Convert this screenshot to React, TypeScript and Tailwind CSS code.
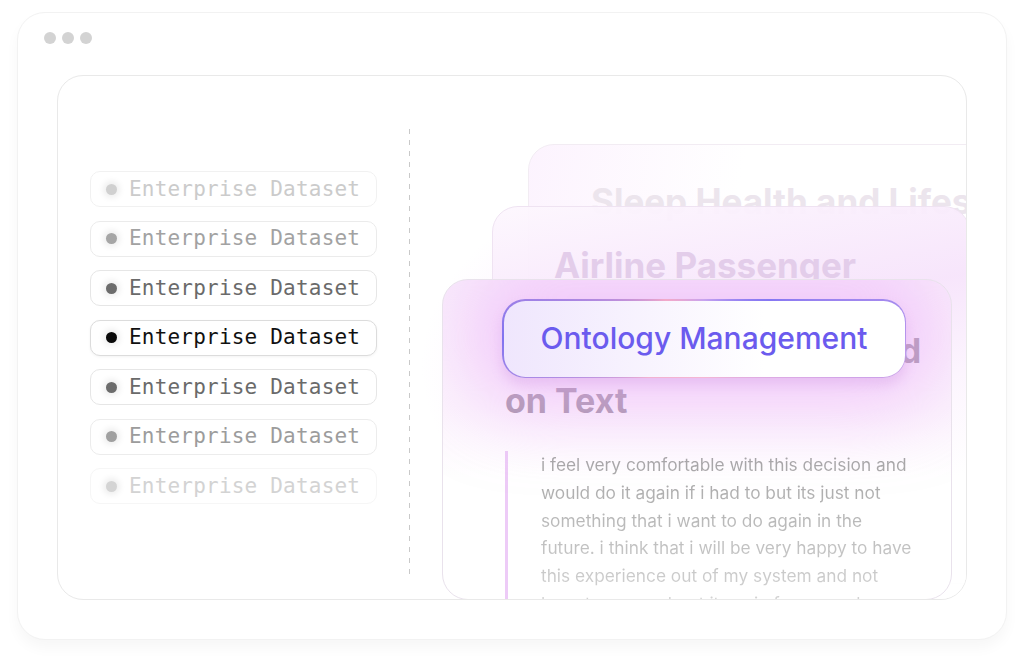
import React from "react";

const datasets = [
  { pill: "border-[#f1f1f1]", dot: "bg-[#d0d0d0]", text: "text-[#cbcbcb]" },
  { pill: "border-[#ebebeb]", dot: "bg-[#a6a6a6]", text: "text-[#a2a2a2]" },
  { pill: "border-[#e6e6e6]", dot: "bg-[#6c6c6c]", text: "text-[#6a6a6a]" },
  { pill: "border-[#dcdcdc] shadow-[0_1px_3px_rgba(0,0,0,0.05)]", dot: "bg-[#0a0a0a]", text: "text-[#111111]" },
  { pill: "border-[#e6e6e6]", dot: "bg-[#6c6c6c]", text: "text-[#6a6a6a]" },
  { pill: "border-[#ececec]", dot: "bg-[#a0a0a0]", text: "text-[#9c9c9c]" },
  { pill: "border-[#f6f6f6]", dot: "bg-[#d4d4d4]", text: "text-[#d3d3d3]" },
];

const excerpt = [
  "i feel very comfortable with this decision and",
  "would do it again if i had to but its just not",
  "something that i want to do again in the",
  "future. i think that i will be very happy to have",
  "this experience out of my system and not",
  "have to worry about it again for a very long",
  "time",
];

const sans = "font-['Inter','Noto_Sans',sans-serif]";

function DatasetPill({ pill, dot, text }: { pill: string; dot: string; text: string }) {
  return (
    <div className={`flex h-[36px] w-[287px] items-center gap-[12px] rounded-[10px] border bg-white pl-[15px] ${pill}`}>
      <span className={`h-[11px] w-[11px] rounded-full shadow-[0_0_6px_3px_rgba(0,0,0,0.07)] ${dot}`} />
      <span className={`font-['DejaVu_Sans_Mono',monospace] text-[21px] leading-none tracking-[0.2px] ${text}`}>
        Enterprise Dataset
      </span>
    </div>
  );
}

export default function App() {
  return (
    <div className="h-[662px] w-[1024px] overflow-hidden bg-white px-[17px] pt-[12px]">
      <div className="flex h-[628px] flex-col rounded-[28px] border border-[#f2f2f2] bg-white shadow-[0_8px_14px_rgba(0,0,0,0.035)]">
        <div className="flex gap-[6px] pl-[26px] pt-[19px]">
          <span className="h-[12px] w-[12px] rounded-full bg-[#d3d3d3]" />
          <span className="h-[12px] w-[12px] rounded-full bg-[#d3d3d3]" />
          <span className="h-[12px] w-[12px] rounded-full bg-[#d3d3d3]" />
        </div>

        <div className="mx-[39px] mt-[31px] flex h-[525px] overflow-hidden rounded-[26px] border border-[#e9e9e9] bg-white">
          <div className="w-[351px] shrink-0 pl-[32px] pt-[95px]">
            <div className="flex flex-col gap-[13.5px]">
              {datasets.map((d, i) => (
                <DatasetPill key={i} {...d} />
              ))}
            </div>
          </div>

          <div className="mb-[21px] mt-[53px] w-px shrink-0 bg-[repeating-linear-gradient(to_bottom,#c9c9c9_0_5px,transparent_5px_11px)]" />

          <div className="relative flex-1">
            <div className="absolute left-[-10px] top-[90px] h-[400px] w-[520px] bg-[radial-gradient(ellipse_at_center,rgba(240,190,250,0.4),rgba(255,255,255,0)_65%)]" />

            <div className="absolute left-[118px] top-[68px] h-[440px] w-[470px] rounded-[26px] border border-[#f2ecf3] bg-[linear-gradient(100deg,rgba(252,242,254,0.9),rgba(255,255,255,0.85)_40%)] pl-[62px] pt-[31px]">
              <div className={`${sans} whitespace-nowrap text-[35px] font-bold leading-[50px] text-[#ece5ed]`}>
                Sleep Health and Lifestyle
              </div>
            </div>

            <div className="absolute left-[82px] top-[130px] h-[420px] w-[478px] rounded-[26px] border border-[#efe3f2] bg-[linear-gradient(170deg,rgba(253,247,254,0.95),rgba(246,227,251,0.92)_30%,rgba(252,244,254,0.9)_50%,rgba(255,255,255,0.95)_70%)] pl-[61px] pt-[33px]">
              <div className={`${sans} whitespace-nowrap text-[35px] font-bold leading-[50px] text-[#e3cdea]`}>
                Airline Passenger
                <br />
                Satisfaction
              </div>
            </div>

            <div className="absolute left-[32px] top-[203px] h-[321px] w-[510px] overflow-hidden rounded-[26px] border border-[#e9e2ec] bg-[linear-gradient(180deg,#f9ebfc,#fcf4fd_40%,#ffffff_62%)]">
              <div className="pl-[62px] pt-[46px]">
                <div className={`${sans} whitespace-nowrap text-[34px] font-bold leading-[50px] text-[#a797aa]`}>
                  Emotion Detection Based
                  <br />
                  on Text
                </div>
                <div className="mt-[25px] border-l-[3px] border-[#edcbf7] pl-[33px]">
                  <p className={`${sans} w-[400px] whitespace-nowrap bg-linear-to-b from-[#a3a3a3] to-[#e2e2e2] bg-clip-text text-[17.3px] leading-[27.8px] text-transparent`}>
                    {excerpt.map((line, i) => (
                      <React.Fragment key={i}>
                        {line}
                        {i < excerpt.length - 1 && <br />}
                      </React.Fragment>
                    ))}
                  </p>
                </div>
              </div>

              <div className="absolute left-[59px] top-[19px] rounded-[23px] bg-[conic-gradient(from_0deg,#c7a3ef,#8577f3_60deg,#d9a9e6_110deg,#f5b7d4_180deg,#f2b2d2_235deg,#8072f0_270deg,#f3a9c9_315deg,#c7a3ef)] p-[1.5px] shadow-[0_0_70px_34px_rgba(236,170,250,0.5),0_7px_12px_rgba(160,90,190,0.22)]">
                <div className="flex h-[76px] w-[401px] items-center justify-center rounded-[21.5px] bg-[linear-gradient(90deg,#efe6fd,#ffffff_65%)]">
                  <span className={`${sans} text-[30px] font-medium text-[#6b5bee]`}>Ontology Management</span>
                </div>
              </div>
            </div>
          </div>
        </div>
      </div>
    </div>
  );
}
